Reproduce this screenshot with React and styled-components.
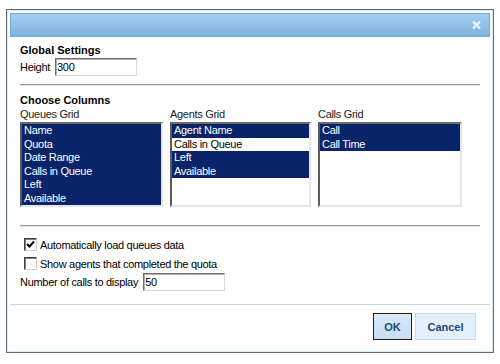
import React, { useState } from 'react';
import styled, { createGlobalStyle } from 'styled-components';

const GlobalStyle = createGlobalStyle`
  body {
    margin: 0;
    background: #fff;
    font-family: "Liberation Sans", Arial, sans-serif;
    font-size: 11px;
    letter-spacing: -0.3px;
    color: #000;
  }
`;

const columns = [
  { title: 'Queues Grid', width: 143, items: ['Name', 'Quota', 'Date Range', 'Calls in Queue', 'Left', 'Available'], selected: [0, 1, 2, 3, 4, 5] },
  { title: 'Agents Grid', width: 141, items: ['Agent Name', 'Calls in Queue', 'Left', 'Available'], selected: [0, 2, 3] },
  { title: 'Calls Grid', width: 144, items: ['Call', 'Call Time'], selected: [0, 1] },
];

const Check = () => (
  <svg width='9' height='9' viewBox='0 0 9 9'>
    <path d='M1 4 L3.5 6.5 L8 1.5' fill='none' stroke='#000' strokeWidth='2' />
  </svg>
);

const Page = () => {
  const [height, setHeight] = useState('300');
  const [calls, setCalls] = useState('50');
  const [autoLoad, setAutoLoad] = useState(true);
  const [showAgents, setShowAgents] = useState(false);

  return (
    <Wrapper>
      <GlobalStyle />
      <Dialog>
        <TitleBar>
          <CloseButton aria-label='close'>
            <svg width='9' height='8' viewBox='0 0 9 8'>
              <path d='M1 0.5 L8 7.5 M8 0.5 L1 7.5' stroke='#e9f1f9' strokeWidth='2.4' />
            </svg>
          </CloseButton>
        </TitleBar>

        <Content>
          {/* Global Settings */}
          <Heading>Global Settings</Heading>
          <FieldRow>
            <span>Height</span>
            <TextInput value={height} onChange={(e) => setHeight(e.target.value)} />
          </FieldRow>

          <Divider />

          {/* Columns */}
          <Heading $top={7}>Choose Columns</Heading>
          <ColumnsGrid>
            {columns.map((col) => (
              <div key={col.title}>
                <GridLabel>{col.title}</GridLabel>
                <ListBox $width={col.width}>
                  {col.items.map((item, index) => (
                    <ListItem key={item} $selected={col.selected.includes(index)}>{item}</ListItem>
                  ))}
                </ListBox>
              </div>
            ))}
          </ColumnsGrid>

          <Divider $top={18} />

          <CheckList>
            <CheckRow onClick={() => setAutoLoad(!autoLoad)}>
              <CheckBox>{autoLoad && <Check />}</CheckBox>
              Automatically load queues data
            </CheckRow>
            <CheckRow onClick={() => setShowAgents(!showAgents)}>
              <CheckBox>{showAgents && <Check />}</CheckBox>
              Show agents that completed the quota
            </CheckRow>
          </CheckList>
          <FieldRow $top={3}>
            <span>Number of calls to display</span>
            <TextInput value={calls} onChange={(e) => setCalls(e.target.value)} />
          </FieldRow>
        </Content>

        <Footer>
          <Button $primary>OK</Button>
          <Button>Cancel</Button>
        </Footer>
      </Dialog>
    </Wrapper>
  );
};

const Wrapper = styled.div`
  padding: 9px 0 0 6px;
`;

const Dialog = styled.div`
  width: 480px;
  height: 336px;
  padding: 3px;
  border: 1px solid #5f6b76;
  box-shadow: inset 0 0 0 1px #dcebf7;
  display: flex;
  flex-direction: column;
  background: #fff;
`;

const TitleBar = styled.div`
  height: 22px;
  border: 1px solid #75abd9;
  background: linear-gradient(to bottom, #a6cdef 0%, #93c0e8 50%, #7db2df 100%);
  display: flex;
  align-items: center;
  justify-content: flex-end;
  padding-right: 8px;
`;

const CloseButton = styled.span`
  display: flex;
  cursor: pointer;
`;

const Content = styled.div`
  padding: 0 10px;
  flex: 1;
`;

const Heading = styled.div`
  font-weight: bold;
  letter-spacing: 0;
  line-height: 14px;
  margin-top: ${(p) => p.$top ?? 6}px;
`;

const FieldRow = styled.div`
  display: flex;
  align-items: center;
  gap: 5px;
  margin-top: ${(p) => p.$top ?? 1}px;
`;

const TextInput = styled.input`
  box-sizing: border-box;
  width: 82px;
  height: 18px;
  padding: 0 1px;
  border: 1px solid;
  border-color: #6f6f6f #d9d9d9 #d9d9d9 #6f6f6f;
  box-shadow: inset 1px 1px 0 #b0b0b0;
  font-family: "Liberation Sans", Arial, sans-serif;
  font-size: 11px;
  letter-spacing: -0.3px;
  color: #000;
  outline: none;
`;

const Divider = styled.div`
  margin-top: ${(p) => p.$top ?? 8}px;
  border-top: 1px solid #9b9b9b;
  border-bottom: 1px solid #e2e2e2;
`;

const ColumnsGrid = styled.div`
  display: flex;
  gap: 7px;
`;

const GridLabel = styled.div`
  line-height: 14px;
  color: #222;
`;

const ListBox = styled.div`
  box-sizing: border-box;
  width: ${(p) => p.$width}px;
  height: 85px;
  margin-top: 1px;
  border: 2px solid;
  border-color: #6c6c6c #e6e6e6 #e6e6e6 #5a5a5a;
  background: #fff;
  overflow: hidden;
`;

const ListItem = styled.div`
  height: 13.5px;
  line-height: 13.5px;
  padding-left: 2px;
  white-space: nowrap;
  background: ${(p) => (p.$selected ? '#0a246a' : '#fff')};
  color: ${(p) => (p.$selected ? '#fff' : '#000')};
`;

const CheckList = styled.div`
  margin-top: 11px;
  display: flex;
  flex-direction: column;
  gap: 6px;
`;

const CheckRow = styled.label`
  display: flex;
  align-items: center;
  gap: 3px;
  height: 13px;
  margin-left: 4px;
  cursor: default;
`;

const CheckBox = styled.span`
  box-sizing: border-box;
  width: 13px;
  height: 13px;
  border: 1px solid;
  border-color: #404040 #d4d0c8 #d4d0c8 #404040;
  box-shadow: inset 1px 1px 0 #808080;
  background: #fff;
  display: flex;
  align-items: center;
  justify-content: center;
`;

const Footer = styled.div`
  border-top: 1px solid #bcd6ee;
  display: flex;
  justify-content: flex-end;
  gap: 3px;
  padding: 8px 14px 9px 0;
`;

const Button = styled.button`
  box-sizing: border-box;
  height: 27px;
  min-width: ${(p) => (p.$primary ? '39px' : '61px')};
  padding: 0 8px;
  border: 1px solid ${(p) => (p.$primary ? '#1f1f1f' : '#c4dbf1')};
  background: ${(p) => (p.$primary ? 'linear-gradient(#d9e8f7, #c8def3)' : '#e4f0fb')};
  color: #1b4a7c;
  font-family: "Liberation Sans", Arial, sans-serif;
  font-size: 11px;
  font-weight: bold;
  cursor: pointer;
`;

const App = () => <Page />;

export default App;
